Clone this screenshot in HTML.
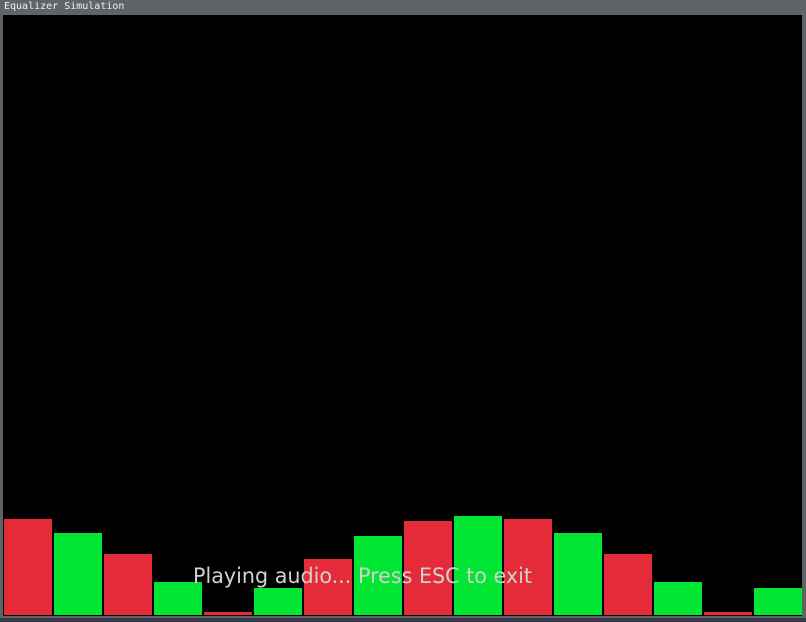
<!DOCTYPE html>
<html><head><style>
html,body{margin:0;padding:0;width:806px;height:622px;overflow:hidden;background:#5d6466;}
#title{position:absolute;left:0;top:0;width:806px;height:15px;background:#5f6566;color:#f0f0f0;font:10px "DejaVu Sans Mono","Liberation Mono",monospace;line-height:13px;padding-left:4px;box-sizing:border-box;}
#win{position:absolute;left:3px;top:15px;width:799px;height:601px;background:#000;}
#bot{position:absolute;left:0;top:618px;width:806px;height:4px;background:#363a44;}
</style></head><body>
<div id="title">Equalizer Simulation</div>
<div id="win"></div>
<div id="bot"></div>
<svg width="806" height="622" style="position:absolute;left:0;top:0">
<g>
<rect x="4" y="519" width="48" height="96" fill="#e52a3a"/>
<rect x="54" y="533" width="48" height="82" fill="#00e632"/>
<rect x="104" y="554" width="48" height="61" fill="#e52a3a"/>
<rect x="154" y="582" width="48" height="33" fill="#00e632"/>
<rect x="204" y="612" width="48" height="3" fill="#e52a3a"/>
<rect x="254" y="588" width="48" height="27" fill="#00e632"/>
<rect x="304" y="559" width="48" height="56" fill="#e52a3a"/>
<rect x="354" y="536" width="48" height="79" fill="#00e632"/>
<rect x="404" y="521" width="48" height="94" fill="#e52a3a"/>
<rect x="454" y="516" width="48" height="99" fill="#00e632"/>
<rect x="504" y="519" width="48" height="96" fill="#e52a3a"/>
<rect x="554" y="533" width="48" height="82" fill="#00e632"/>
<rect x="604" y="554" width="48" height="61" fill="#e52a3a"/>
<rect x="654" y="582" width="48" height="33" fill="#00e632"/>
<rect x="704" y="612" width="48" height="3" fill="#e52a3a"/>
<rect x="754" y="588" width="48" height="27" fill="#00e632"/>
</g>
<text x="193" y="583" textLength="339" lengthAdjust="spacingAndGlyphs" font-family="DejaVu Sans, sans-serif" font-size="21" fill="#d2d2d2">Playing audio... Press ESC to exit</text>
</svg>
</body></html>
